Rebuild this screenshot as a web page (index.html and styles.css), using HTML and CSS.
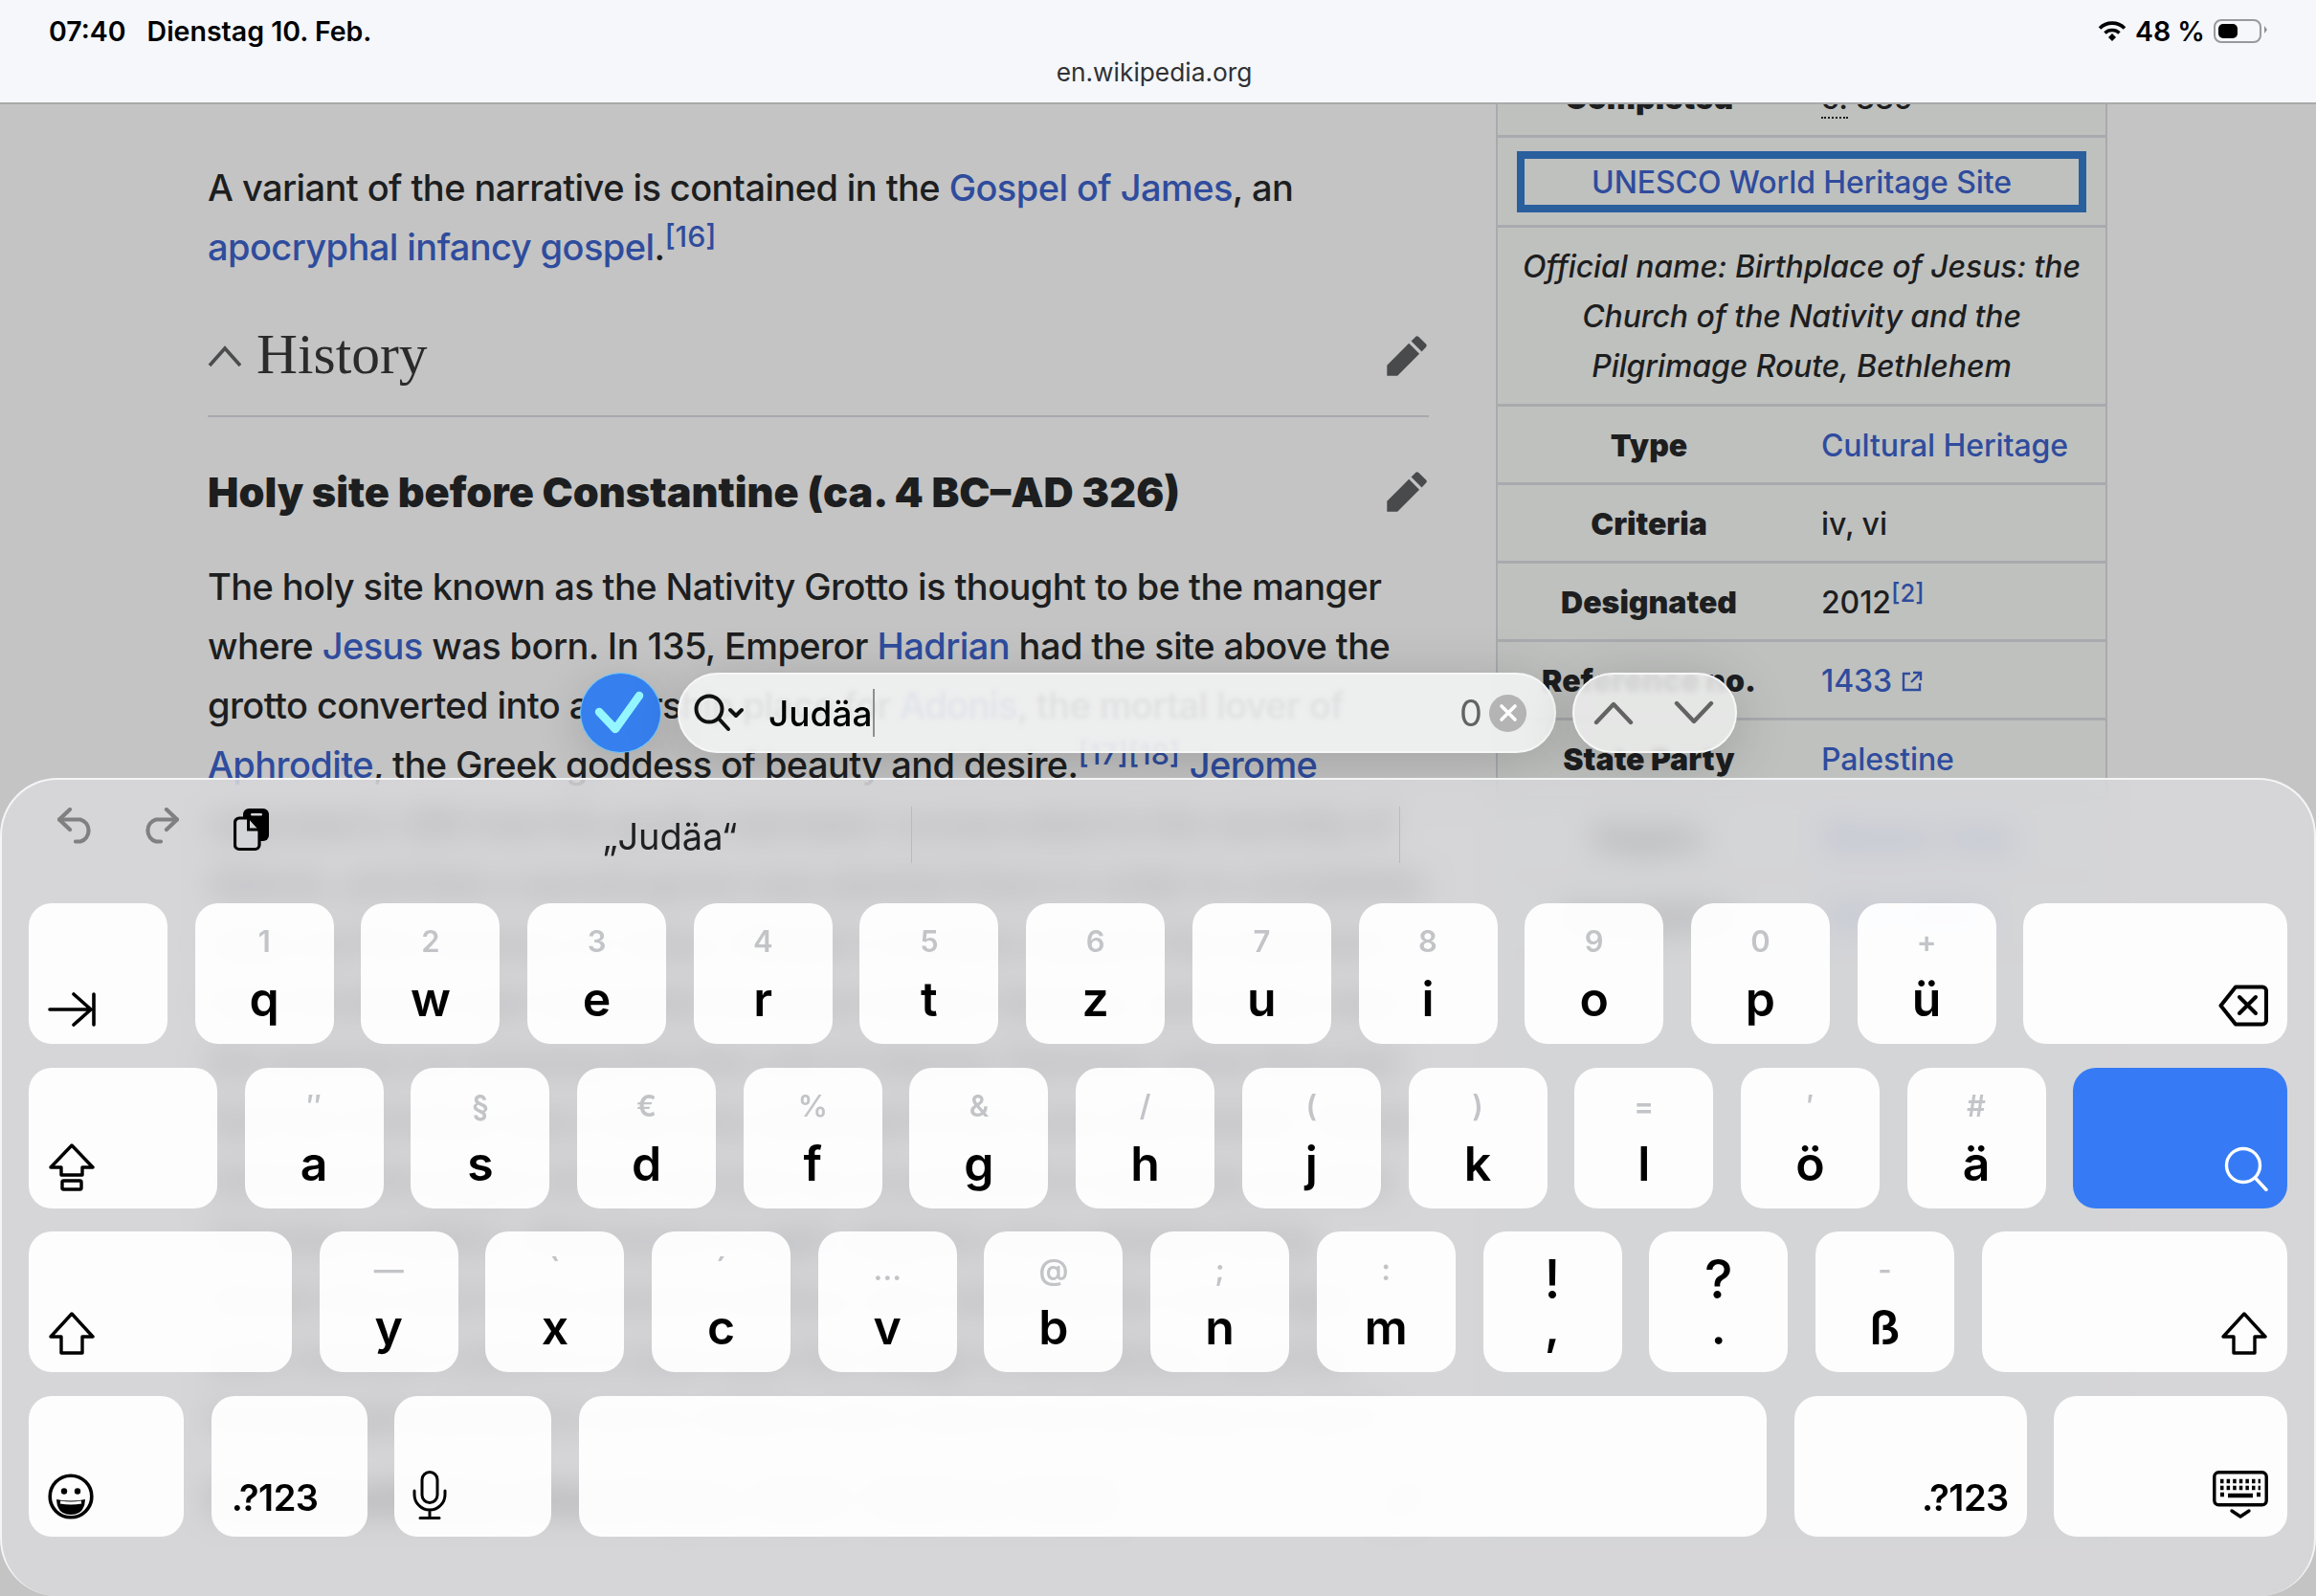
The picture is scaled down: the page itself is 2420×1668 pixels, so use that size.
FILE: index.html
```html
<!DOCTYPE html>
<html lang="de">
<head>
  <meta charset="UTF-8">
  <meta name="viewport" content="width=device-width, initial-scale=1.0">
  <title>Church of the Nativity</title>
  <link rel="stylesheet" href="styles.css">
</head>
<body>
  <header class="topbar">
    <div class="status">
      <div class="status-time"><span>07:40</span><span>Dienstag 10. Feb.</span></div>
      <div class="status-right">
        <svg class="icon" width="30" height="22" viewBox="0 0 30 22" fill="none" stroke="#000" stroke-width="3.6">
          <path d="M2 8.5a18.5 18.5 0 0 1 26 0"/>
          <path d="M7.5 13.5a11 11 0 0 1 15 0"/>
          <path d="M11 18l4-4 4 4-4 4z" fill="#000" stroke="none"/>
        </svg>
        <span>48 %</span>
        <div class="battery"><div class="battery-level"></div></div>
      </div>
    </div>
    <div class="url">en.wikipedia.org</div>
  </header>

  <main class="page">
    <article class="article">
      <p>A variant of the narrative is contained in the <a>Gospel of James</a>, an <a>apocryphal infancy gospel</a>.<sup><a>[16]</a></sup></p>

      <h2 class="section-title">
        <svg class="icon chevron" width="36" height="24" viewBox="0 0 36 24" fill="none" stroke="#4a4c4e" stroke-width="3.6"><path d="M2 22L18 4l16 18"/></svg>
        <span>History</span>
        <svg class="edit" width="46" height="46" viewBox="0 0 20 20" fill="#484a4c"><path d="M16.77 8l1.94-2a1 1 0 0 0 0-1.41l-3.34-3.3a1 1 0 0 0-1.41 0L12 3.23zM1 14.25V19h4.75l9.96-9.96-4.75-4.75z"/></svg>
      </h2>

      <h3 class="sub-title">
        <span>Holy site before Constantine (ca. 4 BC–AD 326)</span>
        <svg class="edit" width="46" height="46" viewBox="0 0 20 20" fill="#484a4c"><path d="M16.77 8l1.94-2a1 1 0 0 0 0-1.41l-3.34-3.3a1 1 0 0 0-1.41 0L12 3.23zM1 14.25V19h4.75l9.96-9.96-4.75-4.75z"/></svg>
      </h3>

      <p class="first">The holy site known as the Nativity Grotto is thought to be the manger where <a>Jesus</a> was born. In 135, Emperor <a>Hadrian</a> had the site above the grotto converted into a worship place for <a>Adonis</a>, the mortal lover of <a>Aphrodite</a>, the Greek goddess of beauty and desire.<sup><a>[17][18]</a></sup> <a>Jerome</a> reported in 395 that the grotto had been consecrated to the worship of Adonis, and that a sacred grove was planted there in order to completely wipe out the memory of Jesus. Modern scholars dispute the argument that Christians had venerated the place before Hadrian, and some read the sources as meaning that the cult of Adonis-Tammuz came first and that the Christian story was only attached to the cave afterwards. Others hold that the pagan shrine was put up on purpose to suppress an older Christian tradition. Whichever is right, pilgrims were already being shown the cave in the second century, and Justin Martyr and Origen both mention a birth in a cave near the village of Bethlehem, and the local people pointed it out to visitors who came from far away to see it.</p>

      <h3 class="sub-title later">
        <span>Constantinian church (ca. 326 – 529 or 556)</span>
        <svg class="edit" width="46" height="46" viewBox="0 0 20 20" fill="#484a4c"><path d="M16.77 8l1.94-2a1 1 0 0 0 0-1.41l-3.34-3.3a1 1 0 0 0-1.41 0L12 3.23zM1 14.25V19h4.75l9.96-9.96-4.75-4.75z"/></svg>
      </h3>
    </article>

    <aside class="infobox">
      <div class="info-row"><div class="info-label">Completed</div><div><abbr>c.</abbr> 339</div></div>
      <div class="info-banner"><div class="heritage"><a>UNESCO World Heritage Site</a></div></div>
      <div class="info-official">Official name: Birthplace of Jesus: the Church of the Nativity and the Pilgrimage Route, Bethlehem</div>
      <div class="info-row"><div class="info-label">Type</div><div><a>Cultural Heritage</a></div></div>
      <div class="info-row"><div class="info-label">Criteria</div><div>iv, vi</div></div>
      <div class="info-row"><div class="info-label">Designated</div><div>2012<sup><a>[2]</a></sup></div></div>
      <div class="info-row"><div class="info-label">Reference no.</div><div><a>1433</a>
        <svg class="ext" width="22" height="22" viewBox="0 0 22 22" fill="none" stroke="#2f4c9d" stroke-width="2.4"><path d="M9 3H2v17h17v-7"/><path d="M12 2h8v8M20 2L10 12"/></svg>
      </div></div>
      <div class="info-row"><div class="info-label">State Party</div><div><a>Palestine</a></div></div>
      <div class="info-row"><div class="info-label">Region</div><div><a>Western Asia</a></div></div>
      <div class="info-row"><div class="info-label">Inscription</div><div><a>2012 (36th)</a></div></div>
    </aside>
  </main>

  <div class="find">
    <button class="find-done">
      <svg width="82" height="82" viewBox="0 0 82 82" fill="none" stroke="#94f6ff" stroke-width="8.5" stroke-linecap="round" stroke-linejoin="round"><path d="M19 40l17 18 25-35"/></svg>
    </button>
    <div class="find-field">
      <svg class="icon" width="56" height="40" viewBox="0 0 56 40" fill="none" stroke="#111" stroke-width="4" stroke-linecap="round" stroke-linejoin="round">
        <circle cx="16" cy="16" r="13.5"/><path d="M26 26l10 11"/><path d="M38 17l6 6 6-6"/>
      </svg>
      <div class="find-text">Judäa</div>
      <div class="find-caret"></div>
      <div class="find-count">0</div>
      <div class="find-clear">
        <svg width="20" height="20" viewBox="0 0 20 20" stroke="#fff" stroke-width="3.6" stroke-linecap="round"><path d="M3 3l14 14M17 3L3 17"/></svg>
      </div>
    </div>
    <div class="find-nav">
      <svg width="42" height="26" viewBox="0 0 42 26" fill="none" stroke="#636363" stroke-width="4.4" stroke-linecap="round" stroke-linejoin="round"><path d="M3 23L21 4l18 19"/></svg>
      <svg width="42" height="26" viewBox="0 0 42 26" fill="none" stroke="#636363" stroke-width="4.4" stroke-linecap="round" stroke-linejoin="round"><path d="M3 3l18 19L39 3"/></svg>
    </div>
  </div>

  <section class="keyboard">
    <div class="toolbar">
      <div class="tools">
        <svg width="38" height="38" viewBox="0 0 38 38" fill="none" stroke="#808080" stroke-width="4.2" stroke-linecap="round" stroke-linejoin="round"><path d="M13 2L2 12.500l11 10.500"/><path d="M2 12.500h22a12 12 0 0 1 0 23h-5"/></svg>
        <svg width="38" height="38" viewBox="0 0 38 38" fill="none" stroke="#808080" stroke-width="4.2" stroke-linecap="round" stroke-linejoin="round"><path d="M25 2l11 10.500L25 23"/><path d="M36 12.500H14a12 12 0 0 0 0 23h5"/></svg>
        <svg class="tool-paste" width="38" height="46" viewBox="0 0 38 46" fill="none">
          <rect x="10" y="1" width="27" height="34" rx="6" fill="#000"/>
          <rect x="18" y="6" width="12" height="2.600" rx="1.300" fill="#d4d5d9"/>
          <path d="M6 11h11l10 11v17a4.500 4.500 0 0 1-4.500 4.500H6A4.500 4.500 0 0 1 1.500 39V15.500A4.500 4.500 0 0 1 6 11z" fill="#d4d5d9" stroke="#000" stroke-width="3.200"/>
          <path d="M15.500 12v11h11" stroke="#000" stroke-width="3"/>
        </svg>
      </div>
      <div class="suggestions">
        <div class="suggestion">„Judäa“</div>
        <div class="suggestion"></div>
      </div>
    </div>

    <div class="key-rows">
      <div class="key-row">
        <div class="key key-icon key-tab">
          <svg width="50" height="36" viewBox="0 0 50 36" fill="none" stroke="#000" stroke-width="3.600" stroke-linecap="round" stroke-linejoin="round"><path d="M2 18h43M27 2l18 16-18 16M48 2v32"/></svg>
        </div>
        <div class="key"><span class="hint">1</span><span class="letter">q</span></div>
        <div class="key"><span class="hint">2</span><span class="letter">w</span></div>
        <div class="key"><span class="hint">3</span><span class="letter">e</span></div>
        <div class="key"><span class="hint">4</span><span class="letter">r</span></div>
        <div class="key"><span class="hint">5</span><span class="letter">t</span></div>
        <div class="key"><span class="hint">6</span><span class="letter">z</span></div>
        <div class="key"><span class="hint">7</span><span class="letter">u</span></div>
        <div class="key"><span class="hint">8</span><span class="letter">i</span></div>
        <div class="key"><span class="hint">9</span><span class="letter">o</span></div>
        <div class="key"><span class="hint">0</span><span class="letter">p</span></div>
        <div class="key"><span class="hint">+</span><span class="letter">ü</span></div>
        <div class="key key-icon key-fill key-end">
          <svg width="52" height="44" viewBox="0 0 52 44" fill="none" stroke="#000" stroke-width="4" stroke-linecap="round" stroke-linejoin="round"><path d="M2.500 22L18 2.500h28a4 4 0 0 1 4 4v31a4 4 0 0 1-4 4H18z"/><path d="M22 13l17 17M39 13L22 30"/></svg>
        </div>
      </div>

      <div class="key-row">
        <div class="key key-icon key-caps">
          <svg width="50" height="50" viewBox="0 0 50 50" fill="none" stroke="#000" stroke-width="3.400" stroke-linejoin="round"><path d="M25 2l22 23H36v8H14v-8H3z"/><rect x="15" y="39" width="20" height="9" rx="1.500"/></svg>
        </div>
        <div class="key"><span class="hint">″</span><span class="letter">a</span></div>
        <div class="key"><span class="hint">§</span><span class="letter">s</span></div>
        <div class="key"><span class="hint">€</span><span class="letter">d</span></div>
        <div class="key"><span class="hint">%</span><span class="letter">f</span></div>
        <div class="key"><span class="hint">&amp;</span><span class="letter">g</span></div>
        <div class="key"><span class="hint">/</span><span class="letter">h</span></div>
        <div class="key"><span class="hint">(</span><span class="letter">j</span></div>
        <div class="key"><span class="hint">)</span><span class="letter">k</span></div>
        <div class="key"><span class="hint">=</span><span class="letter">l</span></div>
        <div class="key"><span class="hint">′</span><span class="letter">ö</span></div>
        <div class="key"><span class="hint">#</span><span class="letter">ä</span></div>
        <div class="key key-icon key-fill key-end key-go">
          <svg width="46" height="47" viewBox="0 0 46 47" fill="none" stroke="#fff" stroke-width="3.400" stroke-linecap="round"><circle cx="20" cy="20" r="17.500"/><path d="M32.500 33L44 45.500"/></svg>
        </div>
      </div>

      <div class="key-row">
        <div class="key key-icon key-shift-left">
          <svg width="50" height="45" viewBox="0 0 50 45" fill="none" stroke="#000" stroke-width="3.400" stroke-linejoin="round"><path d="M25 2l22 24H36v17H14V26H3z"/></svg>
        </div>
        <div class="key"><span class="hint">—</span><span class="letter">y</span></div>
        <div class="key"><span class="hint hint-small">`</span><span class="letter">x</span></div>
        <div class="key"><span class="hint hint-small">´</span><span class="letter">c</span></div>
        <div class="key"><span class="hint">…</span><span class="letter">v</span></div>
        <div class="key"><span class="hint">@</span><span class="letter">b</span></div>
        <div class="key"><span class="hint">;</span><span class="letter">n</span></div>
        <div class="key"><span class="hint">:</span><span class="letter">m</span></div>
        <div class="key"><span class="hint hint-dark">!</span><span class="letter letter-punct">,</span></div>
        <div class="key"><span class="hint hint-dark">?</span><span class="letter letter-punct">.</span></div>
        <div class="key"><span class="hint">-</span><span class="letter">ß</span></div>
        <div class="key key-icon key-fill key-end">
          <svg width="50" height="45" viewBox="0 0 50 45" fill="none" stroke="#000" stroke-width="3.400" stroke-linejoin="round"><path d="M25 2l22 24H36v17H14V26H3z"/></svg>
        </div>
      </div>

      <div class="key-row">
        <div class="key key-icon key-emoji">
          <svg width="48" height="48" viewBox="0 0 48 48">
            <circle cx="24" cy="24" r="21.800" fill="none" stroke="#000" stroke-width="3.600"/>
            <circle cx="17" cy="18.500" r="3.200"/><circle cx="31" cy="18.500" r="3.200"/>
            <path d="M9 27q15 3 30 0q-.5 16-15 16T9 27z"/>
            <path d="M13 30q11 2 22 0" fill="none" stroke="#fff" stroke-width="2.800"/>
          </svg>
        </div>
        <div class="key key-icon key-num"><span class="key-label">.?123</span></div>
        <div class="key key-icon key-mic">
          <svg width="36" height="51" viewBox="0 0 36 51" fill="none" stroke="#000" stroke-width="3" stroke-linecap="round"><rect x="10" y="1.500" width="16" height="32" rx="8"/><path d="M2 21v4a16 16 0 0 0 32 0v-4M18 41v8M8 49.500h20"/></svg>
        </div>
        <div class="key key-space"></div>
        <div class="key key-icon key-num-right key-end"><span class="key-label">.?123</span></div>
        <div class="key key-icon key-fill key-end">
          <svg width="58" height="51" viewBox="0 0 58 51" fill="none" stroke="#000">
            <rect x="1.800" y="1.800" width="54.400" height="34" rx="4.500" stroke-width="3.400"/>
            <path d="M8 11h42M8 18h42" stroke-width="4.500" stroke-dasharray="3.500 3.100"/>
            <path d="M8 25h4M46 25h4" stroke-width="4.500"/>
            <path d="M16 26h26" stroke-width="4.500"/>
            <path d="M20 42l9 6 9-6" stroke-width="3.400" stroke-linecap="round" stroke-linejoin="round"/>
          </svg>
        </div>
      </div>
    </div>
  </section>
</body>
</html>
```

FILE: styles.css
```css
html, body {
  height: 100%;
}

body {
  margin: 0;
  position: relative;
  overflow: hidden;
  background-color: #c4c4c4;
  color: #1d1e1f;
  font-family: Inter, "Noto Sans", sans-serif;
}

a {
  color: #2f4c9d;
}

sup {
  font-size: 0.8em;
  line-height: 0;
  letter-spacing: 0;
}

svg {
  display: block;
  flex-shrink: 0;
}

/* top bar */
.topbar {
  position: relative;
  z-index: 2;
  height: 107px;
  background-color: #f5f7fb;
  border-bottom: 2px solid #a9a9a9;
}

.status {
  height: 64px;
  padding: 0 57px 0 51px;
  display: flex;
  align-items: center;
  justify-content: space-between;
  color: #000;
  font-size: 28.500px;
  font-weight: 600;
}

.status-time {
  display: flex;
  gap: 22px;
}

.status-right {
  display: flex;
  align-items: center;
  gap: 9px;
}

.battery {
  width: 50px;
  height: 25px;
  box-sizing: border-box;
  padding: 3px;
  border: 2px solid #98999c;
  border-radius: 8px;
  position: relative;
}

.battery::after {
  content: "";
  position: absolute;
  right: -8px;
  top: 5px;
  border-left: 3px solid #8f9093;
  border-top: 4px solid transparent;
  border-bottom: 4px solid transparent;
}

.battery-level {
  width: 20px;
  height: 100%;
  background-color: #000;
  border-radius: 5px;
}

.url {
  padding-right: 8px;
  text-align: center;
  font-size: 26.300px;
  line-height: 24px;
  color: #303133;
}

/* article */
.page {
  display: flex;
  gap: 70px;
  padding-left: 217px;
}

.article {
  width: 1276px;
  flex-shrink: 0;
  padding-top: 56px;
  font-size: 38px;
  font-weight: 500;
  letter-spacing: -0.580px;
  line-height: 62px;
}

.article p {
  margin: 0;
}

.article p.first {
  margin-top: 38px;
}

.section-title {
  display: flex;
  align-items: center;
  gap: 15px;
  height: 76px;
  margin: 45px 0 0;
  padding-bottom: 24px;
  border-bottom: 2px solid #a8a9ae;
  font-family: "Liberation Serif", serif;
  font-size: 59.500px;
  font-weight: 400;
  letter-spacing: 0;
  color: #2b2b2b;
}

.section-title span {
  margin-top: -4px;
}

.sub-title {
  display: flex;
  align-items: center;
  height: 60px;
  margin: 48px 0 0;
  font-size: 43.200px;
  font-weight: 900;
  letter-spacing: 0;
}

.sub-title.later {
  margin-top: 24px;
}

.edit {
  margin-left: auto;
}

/* infobox */
.infobox {
  width: 639px;
  box-sizing: border-box;
  margin-top: -47px;
  background-color: #bfc1bf;
  border-left: 2px solid #a9aaae;
  border-right: 2px solid #a9aaae;
  font-size: 32px;
  font-weight: 500;
  letter-spacing: -0.100px;
}

.info-row {
  height: 82px;
  box-sizing: border-box;
  padding-top: 2px;
  display: grid;
  grid-template-columns: 316px 1fr;
  column-gap: 22px;
  align-items: center;
  border-bottom: 3px solid #a9aaae;
}

.info-label {
  text-align: center;
  font-weight: 900;
  letter-spacing: 0;
}

.info-row .ext {
  display: inline-block;
  margin-left: 2px;
}

.info-row abbr {
  border-bottom: 2px dotted #1d1e1f;
}

.info-banner {
  height: 94px;
  box-sizing: border-box;
  padding: 14px 20px;
  border-bottom: 3px solid #a9aaae;
}

.heritage {
  height: 64px;
  box-sizing: border-box;
  border: 8px solid #2a5f9e;
  display: flex;
  align-items: center;
  justify-content: center;
}

.info-official {
  height: 187px;
  box-sizing: border-box;
  padding: 15px 24px 0;
  border-bottom: 3px solid #a9aaae;
  text-align: center;
  font-style: italic;
  line-height: 52px;
}

/* find bar */
.find {
  position: absolute;
  z-index: 3;
  left: 606px;
  top: 703px;
  display: flex;
  align-items: stretch;
  height: 84px;
}

.find-done {
  width: 85px;
  padding: 0;
  box-sizing: border-box;
  border: 1.500px solid #6cc8fb;
  border-radius: 50%;
  background-color: #367fee;
  box-shadow: 0 10px 50px rgba(0, 0, 0, 0.16);
}

.find-field {
  width: 918px;
  margin-left: 17px;
  box-sizing: border-box;
  padding: 0 29px 0 15px;
  display: flex;
  align-items: center;
  border: 2px solid #f7f7f7;
  border-radius: 42px;
  background-color: rgba(240, 241, 241, 0.92);
  backdrop-filter: blur(2px);
  box-shadow: 0 10px 60px rgba(0, 0, 0, 0.18);
}

.find-text {
  margin-left: 22px;
  font-size: 37px;
  font-weight: 500;
  color: #000;
}

.find-caret {
  width: 2px;
  height: 50px;
  margin-left: 1px;
  background-color: #8e8e8e;
}

.find-count {
  margin-left: auto;
  font-size: 38px;
  color: #636363;
}

.find-clear {
  width: 39px;
  height: 39px;
  margin-left: 7px;
  border-radius: 50%;
  background-color: #b4b4b4;
  display: flex;
  align-items: center;
  justify-content: center;
}

.find-nav {
  width: 172px;
  margin-left: 17px;
  box-sizing: border-box;
  padding: 0 22px 0 20px;
  display: flex;
  align-items: center;
  justify-content: space-between;
  border: 2px solid #f7f7f7;
  border-radius: 42px;
  background-color: rgba(234, 236, 235, 0.88);
  backdrop-filter: blur(3px);
  box-shadow: 0 10px 60px rgba(0, 0, 0, 0.18);
}

/* keyboard */
.keyboard {
  position: absolute;
  z-index: 4;
  left: 0;
  right: 0;
  top: 813px;
  bottom: 0;
  box-sizing: border-box;
  border: 2px solid #f4f5f6;
  border-bottom: none;
  border-radius: 60px;
  background-color: rgba(220, 221, 225, 0.72);
  backdrop-filter: blur(16px);
}

.toolbar {
  height: 129px;
  display: flex;
}

.tools {
  width: 441px;
  box-sizing: border-box;
  padding: 29px 0 0 58px;
  display: flex;
  gap: 51px;
}

.tool-paste {
  margin-left: 6px;
}

.suggestions {
  display: flex;
  padding-top: 28px;
}

.suggestion {
  width: 510px;
  height: 59px;
  box-sizing: border-box;
  padding-left: 5px;
  border-right: 1px solid #b9babe;
  text-align: center;
  font-size: 38px;
  line-height: 62px;
  color: #1f2023;
}

.key-rows {
  display: flex;
  flex-direction: column;
  gap: 24.500px;
  padding: 0 28px;
}

.key-row {
  display: flex;
  gap: 28.700px;
  height: 147px;
}

.key {
  width: 145px;
  flex-shrink: 0;
  box-sizing: border-box;
  padding-top: 22px;
  display: flex;
  flex-direction: column;
  align-items: center;
  border-radius: 24px;
  background-color: rgba(254, 254, 255, 0.97);
  color: #000;
}

.hint {
  height: 36px;
  font-size: 31px;
  line-height: 36px;
  font-weight: 600;
  color: #c3c4c7;
}

.hint-small {
  font-size: 34px;
}

.hint-dark {
  margin-top: 10px;
  font-size: 56px;
  font-weight: 500;
  color: #000;
}

.letter {
  margin-top: 12px;
  font-size: 50px;
  line-height: 60px;
  font-weight: 600;
}

.letter-punct {
  margin-top: 2px;
}

.key-icon {
  padding: 0 20px 18px;
  flex-direction: row;
  align-items: flex-end;
  justify-content: flex-start;
}

.key-end {
  justify-content: flex-end;
}

.key-fill {
  flex: 1;
}

.key-tab {
  width: 145px;
}

.key-caps {
  width: 197px;
}

.key-shift-left {
  width: 275px;
}

.key-emoji {
  width: 162px;
}

.key-num {
  width: 163px;
  padding-left: 21px;
}

.key-mic {
  width: 164px;
  padding-left: 19px;
}

.key-space {
  width: 1241px;
}

.key-num-right {
  width: 243px;
  padding-right: 19px;
}

.key-label {
  font-size: 38px;
  line-height: 40px;
  font-weight: 600;
  letter-spacing: -0.500px;
  position: relative;
  top: -3px;
}

.key-go {
  background-color: #367bf5;
}
```
